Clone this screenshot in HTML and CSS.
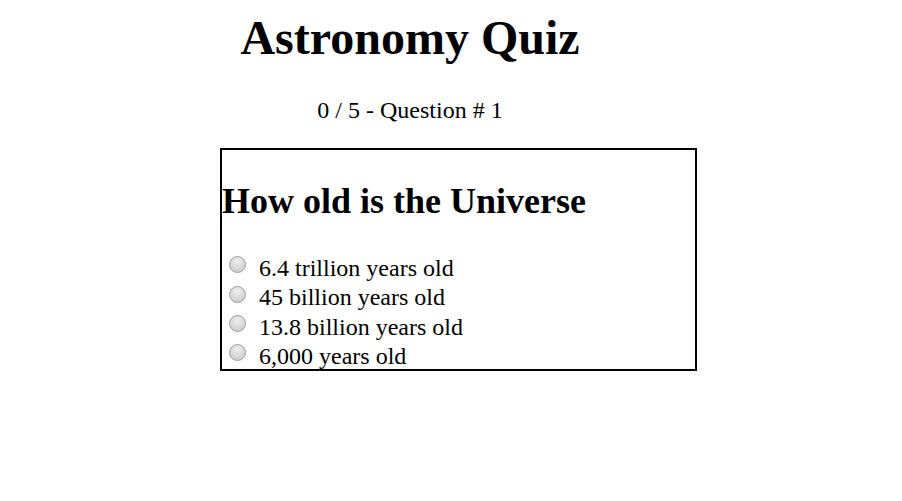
FILE: index.html
```html
<!DOCTYPE html>
<html>
<head>
<meta charset="utf-8">
<link rel="stylesheet" href="styles.css">
</head>
<body>
<div class="page">
  <h1 class="title">Astronomy Quiz</h1>
  <p class="progress">0 / 5 - Question # 1</p>
  <div class="quiz">
    <h2 class="question">How old is the Universe</h2>
    <ul class="options">
      <li class="option"><input type="radio" name="a" class="radio"><span>6.4 trillion years old</span></li>
      <li class="option"><input type="radio" name="a" class="radio"><span>45 billion years old</span></li>
      <li class="option"><input type="radio" name="a" class="radio"><span>13.8 billion years old</span></li>
      <li class="option"><input type="radio" name="a" class="radio"><span>6,000 years old</span></li>
    </ul>
  </div>
</div>
</body>
</html>
```
FILE: styles.css
```css
html, body { margin: 0; padding: 0; background: #fff; }
body { font-family: "Liberation Serif", "Times New Roman", serif; color: #000; }
.page { width: 820px; display: flex; flex-direction: column; align-items: center; }
.title { font-size: 48px; font-weight: bold; margin: 10px 0 0; line-height: 56px; }
.progress { font-size: 24px; margin: 30px 0 0; line-height: 28px; }
.quiz { align-self: flex-start; margin: 24px 0 0 220px; width: 473px; height: 219px; border: 2px solid #000; overflow: hidden; }
.question { font-size: 36px; font-weight: bold; margin: 30px 0 0; line-height: 42px; }
.options { list-style: none; margin: 32px 0 0; padding: 0 0 0 6px; }
.option { display: flex; align-items: center; font-size: 24px; line-height: 29.4px; height: 29.4px; }
.radio { appearance: none; -webkit-appearance: none; width: 17px; height: 17px; margin: 0 13px 8px 1px; border-radius: 50%; border: 1px solid #9e9e9e; background: radial-gradient(circle at 50% 30%, #eeeeee 0%, #d6d6d6 60%, #c4c4c4 100%); box-sizing: border-box; flex: none; }
```
